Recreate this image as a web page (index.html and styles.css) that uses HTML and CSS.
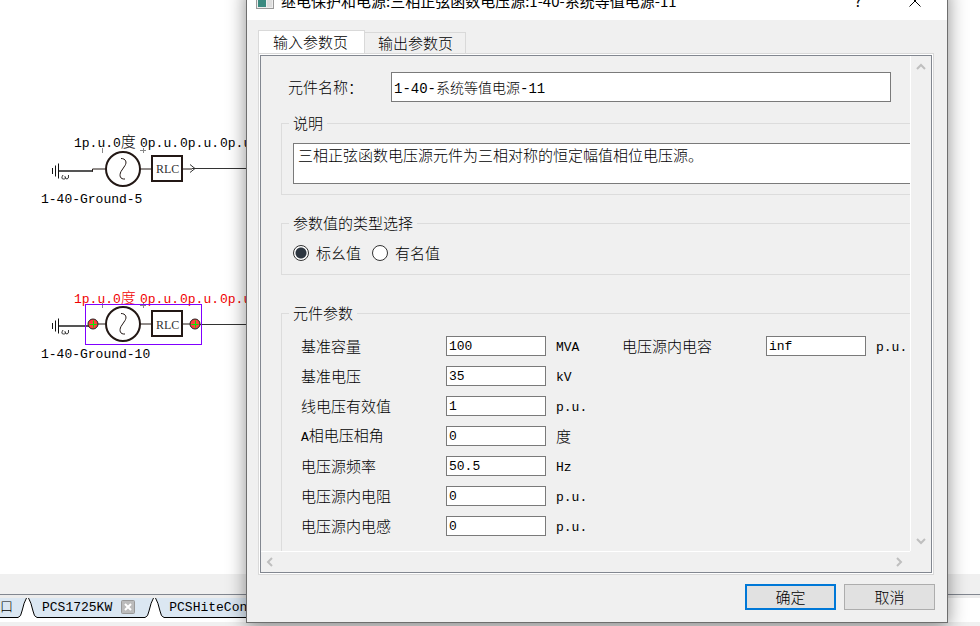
FILE: index.html
```
<!DOCTYPE html>
<html lang="zh-CN">
<head>
  <meta charset="UTF-8" />
  <meta name="viewport" content="width=device-width, initial-scale=1.0"/>
  <title>三相正弦函数电压源</title>
  <link rel="stylesheet" href="styles.css">
</head>
<body>
  <div class="workspace">
    <div class="canvas">
      <svg class="circuit" width="260" height="380">
        <defs>
          <g id="ground" fill="none" stroke="#333">
            <path d="M52.5 168v6M55.5 165.500v11M58.500 163.500v15" stroke="#111"/>
            <path d="M59 171h34" stroke="#555" stroke-width="2"/>
            <path d="M63 175q-2.500 4 .5 4t1.500-2.500q0 2.500 2 2.500t1.500-4"/>
          </g>
          <g id="source" fill="none" stroke="#231815">
            <path d="M92.500 171.500v-2.500h13M140 169h11M182 169h10"/>
            <circle cx="123" cy="169" r="17" fill="#fff" stroke-width="2"/>
            <path d="M121 158.500c5 0 6 4 4 7l-4 6c-2 4-1 8 4 7.500"/>
            <rect x="152" y="156" width="30" height="25" fill="#fff" stroke-width="2"/>
            <path d="M102.500 148v5M140 150.500h6M143.500 148v5" stroke="#888"/>
          </g>
          <g id="port">
            <circle r="5" fill="#ff4040" stroke="#222"/>
            <path d="M-3.500.5h7M.5-3.500v7" stroke="#00f000"/>
          </g>
        </defs>

        <use href="#ground"/>
        <use href="#source"/>
        <path d="M190 164.500l5 4-5 4M192 168.500h68" fill="none" stroke="#333"/>
        <text x="156" y="173" class="rlc">RLC</text>
        <text x="74" y="147" class="node-text">1p.u.0<tspan class="cjk">度</tspan><tspan x="140">0p.u.</tspan><tspan x="180">0p.u.</tspan><tspan x="220">0p.u.</tspan></text>
        <text x="41" y="203" class="node-text">1-40-Ground-5</text>

        <use href="#ground" y="155"/>
        <text x="74" y="303" class="node-text selected">1p.u.0<tspan class="cjk">度</tspan><tspan x="140">0p.u.</tspan><tspan x="180">0p.u.</tspan><tspan x="220">0p.u.</tspan></text>
        <use href="#source" y="155"/>
        <path d="M192 324.500h68" stroke="#333"/>
        <text x="156" y="329" class="rlc">RLC</text>
        <rect x="85.500" y="304.500" width="116" height="40" fill="none" stroke="#8000ff"/>
        <use href="#port" x="93" y="324"/>
        <use href="#port" x="195" y="324"/>
        <text x="41" y="358" class="node-text">1-40-Ground-10</text>
      </svg>
    </div>
    <div class="divider"></div>
    <div class="doc-tabs">
      <div class="doc-tab">
        <button class="doc-name first">口</button>
        <svg class="slant" width="9" height="20"><path d="M0 0h8Q6 4 4 13 3 19 0 19z" fill="#dbe7f2"/><path d="M8.500 0Q6 4 4 13 3 19 0 19.500" fill="none" stroke="#000"/></svg>
      </div>
      <div class="doc-tab">
        <svg class="slant" width="9" height="20"><path d="M9 0H1Q3 4 5 13 6 19 9 19z" fill="#dbe7f2"/><path d="M.5 0Q3 4 5 13 6 19 9 19.500" fill="none" stroke="#000"/></svg>
        <button class="doc-name">PCS1725KW</button>
        <button class="doc-close" aria-label="关闭">
          <svg width="14" height="14"><rect x=".5" y=".5" width="13" height="13" rx="1" fill="#bbb" stroke="#999"/><path d="M4 4l6 6M10 4l-6 6" stroke="#fff" stroke-width="2"/></svg>
        </button>
        <svg class="slant" width="9" height="20"><path d="M0 0h8Q6 4 4 13 3 19 0 19z" fill="#dbe7f2"/><path d="M8.500 0Q6 4 4 13 3 19 0 19.500" fill="none" stroke="#000"/></svg>
      </div>
      <div class="doc-tab">
        <svg class="slant" width="9" height="20"><path d="M9 0H1Q3 4 5 13 6 19 9 19z" fill="#dbe7f2"/><path d="M.5 0Q3 4 5 13 6 19 9 19.500" fill="none" stroke="#000"/></svg>
        <button class="doc-name">PCSHiteCon</button>
      </div>
    </div>
    <div class="status"></div>
  </div>

  <div class="dialog" role="dialog" aria-labelledby="dialog-title">
    <div class="titlebar">
      <svg class="app-icon" width="18" height="16"><rect x=".5" y=".5" width="17" height="15" fill="#eee" stroke="#999"/><rect x="2" y="2" width="8" height="12" fill="#3a8a80"/><rect x="11" y="2" width="5" height="12" fill="#ddd"/></svg>
      <span class="title" id="dialog-title">继电保护和电源:三相正弦函数电压源:1-40-系统等值电源-11</span>
      <button class="title-btn" aria-label="帮助">?</button>
      <button class="title-btn" aria-label="关闭"><svg width="12" height="12"><path d="M.5.5l11 11M11.500.5l-11 11" stroke="#000"/></svg></button>
    </div>

    <div class="dialog-body">
      <div class="tabs">
        <button class="tab active">输入参数页</button>
        <button class="tab">输出参数页</button>
      </div>
      <div class="pane">
        <div class="scroll-area">
          <div class="form">
            <div class="name-row">
              <label for="name">元件名称：</label>
              <input type="text" id="name" value="1-40-系统等值电源-11">
            </div>

            <fieldset class="group">
              <legend>说明</legend>
              <textarea class="description" aria-label="说明">三相正弦函数电压源元件为三相对称的恒定幅值相位电压源。</textarea>
            </fieldset>

            <fieldset class="group">
              <legend>参数值的类型选择</legend>
              <div class="radios">
                <label><input type="radio" name="kind" checked>标幺值</label>
                <label><input type="radio" name="kind">有名值</label>
              </div>
            </fieldset>

            <fieldset class="group params">
              <legend>元件参数</legend>
              <div class="param-grid">
                <label for="p1">基准容量</label><input type="text" id="p1" value="100"><span class="unit">MVA</span>
                <label for="p8">电压源内电容</label><input type="text" id="p8" value="inf"><span class="unit">p.u.</span>
                <label for="p2">基准电压</label><input type="text" id="p2" value="35"><span class="unit">kV</span>
                <label for="p3" class="row-start">线电压有效值</label><input type="text" id="p3" value="1"><span class="unit">p.u.</span>
                <label for="p4" class="row-start"><span class="latin">A</span>相电压相角</label><input type="text" id="p4" value="0"><span class="unit cjk">度</span>
                <label for="p5" class="row-start">电压源频率</label><input type="text" id="p5" value="50.5"><span class="unit">Hz</span>
                <label for="p6" class="row-start">电压源内电阻</label><input type="text" id="p6" value="0"><span class="unit">p.u.</span>
                <label for="p7" class="row-start">电压源内电感</label><input type="text" id="p7" value="0"><span class="unit">p.u.</span>
              </div>
            </fieldset>
          </div>
          <div class="scroll-v">
            <svg width="10" height="8"><path d="M1 6l4-4 4 4" /></svg>
            <svg width="10" height="8"><path d="M1 2l4 4 4-4" /></svg>
          </div>
          <div class="scroll-h">
            <svg width="8" height="10"><path d="M6 1L2 5l4 4" /></svg>
            <svg width="8" height="10"><path d="M2 1l4 4-4 4" /></svg>
          </div>
        </div>
      </div>
    </div>

    <div class="actions">
      <button class="btn primary">确定</button>
      <button class="btn">取消</button>
    </div>
  </div>
</body>
</html>
```

FILE: styles.css
```
* {
  box-sizing: border-box;
  margin: 0;
  padding: 0;
}

body {
  font-family: "Noto Sans CJK SC", sans-serif;
  font-size: 15px;
  font-weight: 300;
  line-height: 20px;
  color: #000;
  background: #f0f0f0;
  height: 100vh;
  overflow: hidden;
}

button, input, textarea {
  font: inherit;
  color: inherit;
}

/* main window behind the dialog */
.workspace {
  height: 100%;
  display: flex;
  flex-direction: column;
}

.canvas {
  flex: 1;
  min-height: 0;
  background: #fff;
  overflow: hidden;
}

.circuit {
  display: block;
}

.node-text {
  font-family: "Liberation Mono", monospace;
  font-size: 13px;
}

.node-text.selected {
  fill: #f00000;
}

.node-text .cjk {
  font-family: "Noto Sans CJK SC", sans-serif;
  font-size: 15px;
}

.rlc {
  font-family: "Liberation Serif", serif;
  font-size: 12px;
  fill: #333;
}

.divider {
  height: 21px;
  border-bottom: 1px solid #828790;
}

.doc-tabs {
  display: flex;
  height: 24px;
  gap: 1px;
  padding-top: 3px;
  background: #fff;
  box-shadow: inset 0 3px #ececec;
}

.doc-tab {
  display: flex;
  height: 20px;
}

.doc-name, .doc-close {
  height: 20px;
  border: none;
  border-bottom: 1px solid #000;
  background: #dbe7f2;
}

.doc-name {
  font-family: "Liberation Mono", "Noto Sans CJK SC", monospace;
  font-size: 13px;
  padding: 0 5px;
}

.doc-name.first {
  padding: 0 5px 0 0;
}

.doc-close {
  padding: 0 10px 2px 4px;
}

.doc-close svg, .slant {
  display: block;
}

.status {
  height: 7px;
  border-top: 3px solid #fff;
}

/* parameter dialog */
.dialog {
  position: absolute;
  top: -15px;
  left: 246px;
  right: 32px;
  background: #f0f0f0;
  border: 1px solid #6e6e6e;
  box-shadow: 0 4px 18px rgba(0, 0, 0, 0.45);
}

.titlebar {
  display: flex;
  align-items: center;
  height: 34px;
  padding: 0 24px 4px 9px;
  font-weight: 400;
  background: #fff;
}

.title {
  flex: 1;
  margin-left: 7px;
  white-space: nowrap;
}

.title-btn {
  width: 16px;
  height: 20px;
  margin-left: 41px;
  border: none;
  background: none;
}

.dialog-body {
  padding: 10px 13px 0 11px;
}

.tabs {
  display: flex;
  align-items: flex-end;
}

.tab {
  height: 21px;
  padding: 0 12px 0 13px;
  line-height: 18px;
  border: 1px solid #d9d9d9;
  border-left: none;
  border-bottom: none;
  background: #f0f0f0;
}

.tab.active {
  height: 23px;
  padding: 0 16px 0 14px;
  line-height: 20px;
  border-left: 1px solid #d9d9d9;
  background: #fff;
}

.pane {
  padding: 1px;
  border: 1px solid #d9d9d9;
  background: #fff;
}

.scroll-area {
  display: grid;
  grid-template-columns: 1fr 21px;
  grid-template-rows: auto 21px;
  border: 1px solid #828790;
  background: #f0f0f0;
}

.form {
  min-width: 0;
  padding: 16px 0 0 20px;
}

.scroll-v, .scroll-h {
  display: flex;
  align-items: center;
  justify-content: space-between;
}

.scroll-v {
  flex-direction: column;
  padding: 7px 0 6px;
  border-left: 1px solid #fff;
}

.scroll-h {
  padding: 0 7px 0 5px;
  border-top: 1px solid #fff;
}

.scroll-v path, .scroll-h path {
  fill: none;
  stroke: #bfbfbf;
  stroke-width: 2;
}

input[type="text"], .description {
  border: 1px solid #7a7a7a;
  border-radius: 0;
  background: #fff;
  outline: none;
}

.name-row {
  display: flex;
  align-items: center;
  padding: 0 19px 0 7px;
  margin-bottom: 11px;
}

.name-row label {
  width: 103px;
}

.name-row input {
  flex: 1;
  min-width: 0;
  height: 30px;
  padding: 0 2px;
  font-family: "Liberation Mono", "Noto Sans CJK SC", monospace;
  font-size: 14px;
}

.group {
  min-width: 0;
  padding: 10px 0 10px 11px;
  margin-bottom: 18px;
  border: 1px solid #dcdcdc;
  border-right: none;
}

.group legend {
  margin-left: -4px;
  padding: 0 4px;
}

.description {
  display: block;
  width: 100%;
  height: 41px;
  padding: 1px 4px;
  border-right: none;
  resize: none;
  overflow: hidden;
}

.radios {
  display: flex;
  gap: 11px;
  padding-bottom: 1px;
}

.radios label {
  display: flex;
  align-items: center;
  gap: 7px;
}

.radios input {
  appearance: none;
  width: 16px;
  height: 16px;
  border: 1px solid #333;
  border-radius: 50%;
  background: #fff;
}

.radios input:checked {
  background: radial-gradient(circle, #2d3640 5px, #fff 6px);
}

.group.params {
  margin: 28px 0 0;
  padding: 8px 0 10px 19px;
  border-bottom: none;
}

.group.params legend {
  margin-left: -12px;
}

.param-grid {
  display: grid;
  grid-template-columns: 145px 100px 76px 144px 100px 1fr;
  grid-auto-rows: 30px;
  align-items: center;
}

.row-start {
  grid-column: 1;
}

.param-grid input {
  width: 100%;
  height: 20px;
  padding: 2px 2px 0;
  font-family: "Liberation Mono", monospace;
  font-size: 13px;
}

.unit {
  padding: 3px 0 0 10px;
  font-family: "Liberation Mono", monospace;
  font-size: 13px;
}

.unit.cjk {
  padding-top: 0;
  font-family: "Noto Sans CJK SC", sans-serif;
  font-size: 15px;
}

.latin {
  font-family: "Liberation Mono", monospace;
  font-size: 13px;
}

.actions {
  display: flex;
  justify-content: flex-end;
  gap: 8px;
  padding: 9px 12px 12px;
}

.btn {
  width: 91px;
  height: 26px;
  border: 1px solid #adadad;
  background: #e1e1e1;
}

.btn.primary {
  border: 2px solid #0078d7;
}
```
